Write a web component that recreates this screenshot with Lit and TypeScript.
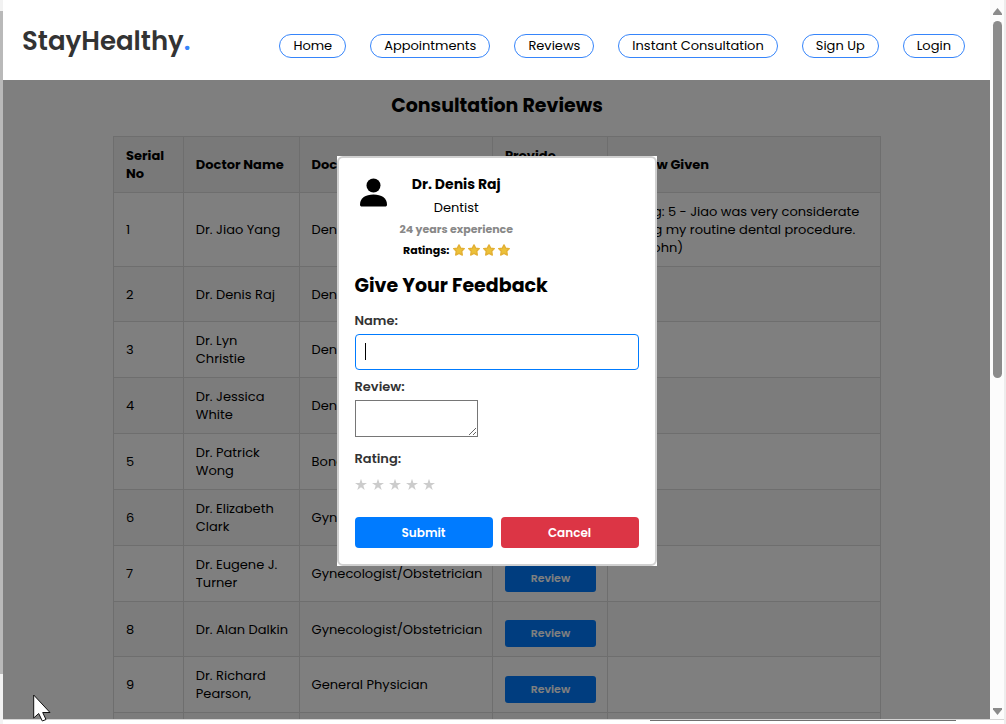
import { LitElement, html, css } from "lit";
import { customElement, state } from "lit/decorators.js";

interface Doctor {
  name: string;
  speciality: string;
  review?: string;
}

const NAV = ["Home", "Appointments", "Reviews", "Instant Consultation", "Sign Up", "Login"];

const DOCTORS: Doctor[] = [
  {
    name: "Dr. Jiao Yang",
    speciality: "Dentist",
    review: "Rating: 5 - Jiao was very considerate during my routine dental procedure. (by John)",
  },
  { name: "Dr. Denis Raj", speciality: "Dentist" },
  { name: "Dr. Lyn Christie", speciality: "Dentist" },
  { name: "Dr. Jessica White", speciality: "Dentist" },
  { name: "Dr. Patrick Wong", speciality: "Bone Specialist" },
  { name: "Dr. Elizabeth Clark", speciality: "Gynecologist" },
  { name: "Dr. Eugene J. Turner", speciality: "Gynecologist/Obstetrician" },
  { name: "Dr. Alan Dalkin", speciality: "Gynecologist/Obstetrician" },
  { name: "Dr. Richard Pearson,", speciality: "General Physician" },
  { name: "Dr. Emma Stone", speciality: "General Physician" },
];

@customElement("site-header")
class SiteHeader extends LitElement {
  static styles = css`
    :host {
      display: flex;
      justify-content: space-between;
      align-items: center;
      height: 80px;
      padding: 0 25px 0 19px;
      box-sizing: border-box;
      background: #fff;
    }
    .logo {
      padding-top: 2px;
      font-size: 26px;
      font-weight: 600;
      line-height: 40px;
      color: #333;
      text-decoration: none;
    }
    .dot {
      color: #3685fb;
    }
    .nav {
      display: flex;
      gap: 24px;
      padding-top: 12px;
    }
    .link {
      padding: 0 13px;
      border: 1px solid #3685fb;
      border-radius: 12px;
      font-size: 13px;
      line-height: 22px;
      color: #000;
      text-decoration: none;
      white-space: nowrap;
    }
  `;
  render() {
    return html`
      <a class="logo" href="#">StayHealthy<span class="dot">.</span></a>
      <nav class="nav">${NAV.map((n) => html`<a class="link" href="#">${n}</a>`)}</nav>
    `;
  }
}

@customElement("review-table")
class ReviewTable extends LitElement {
  static styles = css`
    :host {
      display: block;
      padding: 0 109px 0 110px;
    }
    .title {
      margin: 0;
      padding: 11px 0 15px;
      font-size: 19px;
      font-weight: 700;
      line-height: 30px;
      text-align: center;
    }
    .table {
      width: 100%;
      table-layout: fixed;
      border-collapse: separate;
      border-spacing: 0;
      border-top: 1px solid #ddd;
      border-left: 1px solid #ddd;
      font-size: 13px;
      line-height: 18px;
    }
    .no { width: 9.1%; }
    .name { width: 15.1%; }
    .spec { width: 25.2%; }
    .act { width: 15%; }
    th,
    td {
      height: 55px;
      box-sizing: border-box;
      padding: 10px 11px 9px 12px;
      border-right: 1px solid #ddd;
      border-bottom: 1px solid #ddd;
      text-align: left;
      vertical-align: middle;
    }
    .name-cell {
      padding-right: 10px;
    }
    .spec-cell {
      white-space: nowrap;
    }
    th {
      background: #f2f2f2;
    }
    tbody tr:nth-child(even) {
      background: #f9f9f9;
    }
    .review {
      display: block;
      width: 100%;
      height: 27px;
      margin-top: 8px;
      padding: 0;
      border: 0;
      border-radius: 3px;
      background: #007bff;
      color: #fff;
      font: 600 11px/27px Poppins, Inter, sans-serif;
    }
  `;
  render() {
    return html`
      <h1 class="title">Consultation Reviews</h1>
      <table class="table">
        <colgroup>
          <col class="no" /><col class="name" /><col class="spec" /><col class="act" /><col />
        </colgroup>
        <thead>
          <tr>
            <th>Serial No</th>
            <th>Doctor Name</th>
            <th>Doctor Speciality</th>
            <th>Provide Review</th>
            <th>Review Given</th>
          </tr>
        </thead>
        <tbody>
          ${DOCTORS.map(
            (d, i) => html`<tr>
              <td>${i + 1}</td>
              <td class="name-cell">${d.name}</td>
              <td class="spec-cell">${d.speciality}</td>
              <td><button class="review" type="button">Review</button></td>
              <td>${d.review ?? ""}</td>
            </tr>`
          )}
        </tbody>
      </table>
    `;
  }
}

@customElement("feedback-dialog")
class FeedbackDialog extends LitElement {
  @state() rating = 0;

  static styles = css`
    :host {
      display: block;
      width: 320px;
      background: #fff;
      font-size: 13px;
    }
    .card {
      padding: 16px;
      border: 2px solid #d0d0d0;
      border-radius: 6px;
      background: #fff;
    }
    .doctor {
      display: flex;
      gap: 12px;
      padding-left: 5px;
    }
    .avatar {
      width: 28px;
      height: 30px;
      margin-top: 4px;
    }
    .info {
      display: flex;
      flex-direction: column;
      align-items: center;
    }
    .who {
      margin: 0;
      font-size: 14px;
      font-weight: 700;
      line-height: 20px;
    }
    .field-of {
      font-size: 13px;
      line-height: 27px;
    }
    .years {
      font-size: 11px;
      font-weight: 700;
      line-height: 17px;
      color: #888;
    }
    .ratings {
      display: flex;
      align-items: center;
      gap: 3px;
      font-size: 11px;
      font-weight: 700;
      line-height: 24px;
    }
    .gold {
      width: 12px;
      height: 12px;
    }
    .heading {
      margin: 0;
      padding: 9px 0 10px;
      font-size: 19px;
      font-weight: 700;
      line-height: 30px;
    }
    .label {
      display: block;
      font-weight: 600;
      line-height: 20px;
      color: #333;
    }
    .entry {
      position: relative;
      margin: 3px 0 7px;
    }
    .input {
      display: block;
      width: 100%;
      height: 36px;
      box-sizing: border-box;
      padding: 0 10px;
      border: 1px solid #007bff;
      border-radius: 4px;
      outline: none;
      font: 13px/18px Poppins, Inter, sans-serif;
      caret-color: transparent;
    }
    .caret {
      position: absolute;
      left: 10px;
      top: 9px;
      width: 1px;
      height: 17px;
      background: #000;
    }
    .area {
      display: block;
      width: 123px;
      height: 37px;
      box-sizing: border-box;
      margin: 3px 0 12px;
      padding: 2px;
      border: 1px solid #767676;
      outline: none;
      resize: both;
    }
    .stars {
      display: flex;
      gap: 5px;
      margin: 0;
      padding: 9px 0 26px;
      border: 0;
    }
    .star {
      position: relative;
      display: block;
      width: 12px;
      height: 13px;
      color: #ccc;
    }
    .star.on {
      color: #f5b301;
    }
    .star input {
      position: absolute;
      inset: 0;
      margin: 0;
      opacity: 0;
    }
    .star svg {
      display: block;
      width: 12px;
      height: 13px;
    }
    .actions {
      display: grid;
      grid-template-columns: 1fr 1fr;
      gap: 8px;
    }
    .btn {
      height: 31px;
      padding: 0;
      border: 0;
      border-radius: 4px;
      color: #fff;
      font: 600 12px/31px Poppins, Inter, sans-serif;
    }
    .submit {
      background: #007bff;
    }
    .cancel {
      background: #dc3545;
    }
  `;

  render() {
    return html`
      <form class="card" @submit=${(e: Event) => e.preventDefault()}>
        <div class="doctor">
          <svg class="avatar" viewBox="0 0 28 30" aria-hidden="true">
            <circle cx="13.500" cy="7.5" r="7" />
            <path d="M0 26.500C0 20 5.500 16.500 13.500 16.500S27 20 27 26.500C27 28 26.300 28.500 25 28.500H2C.7 28.500 0 28 0 26.500Z" />
          </svg>
          <div class="info">
            <h2 class="who">Dr. Denis Raj</h2>
            <span class="field-of">Dentist</span>
            <span class="years">24 years experience</span>
            <span class="ratings">
              Ratings:
              ${[1, 2, 3, 4].map(
                () => html`<svg class="gold" viewBox="0 0 12 12" aria-hidden="true">
                  <path
                    d="M6 .9L7.600 4.100L11.300 4.600L8.700 7.200L9.300 11L6 9.400L2.700 11L3.300 7.200L.7 4.600L4.400 4.100Z"
                    fill="#ecc138" stroke="#e3b034" stroke-width="1.400" stroke-linejoin="round" />
                </svg>`
              )}
            </span>
          </div>
        </div>
        <h2 class="heading">Give Your Feedback</h2>
        <label class="label" for="name">Name:</label>
        <div class="entry">
          <input class="input" id="name" type="text" />
          <span class="caret"></span>
        </div>
        <label class="label" for="review">Review:</label>
        <textarea class="area" id="review"></textarea>
        <span class="label" id="rating">Rating:</span>
        <div class="stars" role="radiogroup" aria-labelledby="rating">
          ${[1, 2, 3, 4, 5].map(
            (n) => html`<label class="star ${n <= this.rating ? "on" : ""}">
              <input type="radio" name="rating" aria-label="${n} stars" @change=${() => (this.rating = n)} />
              <svg viewBox="0 0 12 13" aria-hidden="true">
                <path fill="currentColor" d="M6 .8L7.400 5H12L8.300 7.600L9.700 12L6 9.300L2.300 12L3.700 7.600L0 5H4.600Z" />
              </svg>
            </label>`
          )}
        </div>
        <div class="actions">
          <button class="btn submit" type="submit">Submit</button>
          <button class="btn cancel" type="button">Cancel</button>
        </div>
      </form>
    `;
  }
}

@customElement("app-root")
class AppRoot extends LitElement {
  static styles = css`
    :host {
      display: grid;
      grid-template-columns: 3px minmax(0, 1fr) 14px 2px;
      grid-template-rows: minmax(0, 1fr) 5px;
      height: 100vh;
      background: #fff;
      color: #000;
      font-family: Poppins, Inter, sans-serif;
    }
    .edge {
      grid-row: 1 / 3;
      display: flex;
      flex-direction: column;
      padding: 11px 0 50px;
      background: #f2f2f2;
    }
    .edge-thumb {
      flex: 1;
      background: #b9b9b9;
    }
    .page {
      position: relative;
      overflow: hidden;
    }
    .top {
      position: relative;
      z-index: 2;
    }
    .overlay {
      position: absolute;
      inset: 0;
      z-index: 1;
      display: grid;
      place-items: center;
      padding-top: 3px;
      background: rgba(0, 0, 0, 0.5);
    }
    .scroll {
      display: flex;
      flex-direction: column;
      align-items: center;
      justify-content: space-between;
      padding: 8px 0 4px;
      background: #fcfcfc;
    }
    .thumb {
      flex: 1;
      width: 100%;
      display: flex;
      justify-content: center;
      padding: 6px 0 0;
    }
    .thumb::before {
      content: "";
      width: 9px;
      height: 52%;
      border-radius: 5px;
      background: #8b8b8b;
    }
    .arrow {
      width: 9px;
      height: 7px;
      fill: #8b8b8b;
    }
    .side {
      grid-row: 1 / 3;
      grid-column: 4;
      background: #ededed;
    }
    .bottom {
      grid-row: 2;
      grid-column: 2 / 4;
      border-top: 1px solid #d4d4d4;
    }
    .bottom-line {
      width: 306px;
      height: 1px;
      margin: 0 48px 0 auto;
      background: #707070;
    }
    .cursor {
      position: absolute;
      z-index: 3;
      left: 33px;
      bottom: 2px;
      width: 18px;
      height: 28px;
    }
  `;

  render() {
    return html`
      <div class="edge"><div class="edge-thumb"></div></div>
      <div class="page">
        <site-header class="top"></site-header>
        <review-table></review-table>
        <div class="overlay"><feedback-dialog></feedback-dialog></div>
      </div>
      <div class="scroll">
        <svg class="arrow" viewBox="0 0 9 7"><path d="M4.500 0L9 5.500V7H0V5.500Z" /></svg>
        <div class="thumb"></div>
        <svg class="arrow" viewBox="0 0 9 7"><path d="M0 0H9V1.500L4.500 7L0 1.500Z" /></svg>
      </div>
      <div class="side"></div>
      <div class="bottom"><div class="bottom-line"></div></div>
      <svg class="cursor" viewBox="0 0 18 28" aria-hidden="true">
        <path d="M.7 1V24L5.700 19.500L9.300 27L13 25.500L9.700 18.500H17Z" fill="#fff" stroke="#111" />
      </svg>
    `;
  }
}
